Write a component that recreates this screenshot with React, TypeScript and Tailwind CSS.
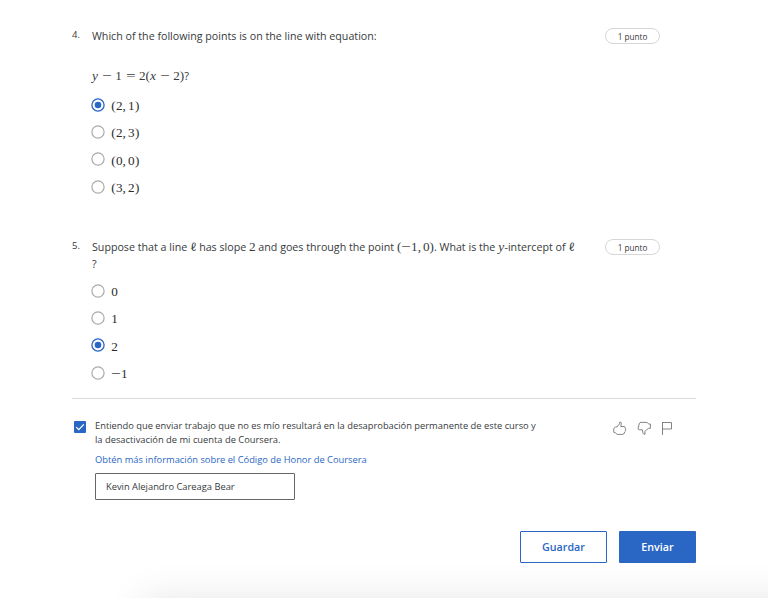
import type { ReactNode } from "react";

function Var({ children }: { children: ReactNode }) {
  return <i className="mr-[0.4px] font-['Liberation_Serif',serif] text-[13.4px] leading-none italic">{children}</i>;
}

function Num({ children }: { children: ReactNode }) {
  return <span className="font-['Liberation_Serif',serif] text-[13.2px] leading-none">{children}</span>;
}

function Ell() {
  return <span className="font-['DejaVu_Math_TeX_Gyre','DejaVu_Serif',serif] text-[11.5px] leading-none">ℓ</span>;
}

function Op({ children }: { children: ReactNode }) {
  return (
    <span className="mx-[3.3px] inline-block w-[10.4px] text-center">
      <span className="inline-block scale-x-130">{children}</span>
    </span>
  );
}

function Neg() {
  return (
    <span className="inline-block w-[9.8px] text-center">
      <span className="inline-block scale-x-130">−</span>
    </span>
  );
}

function Pair({ a, b }: { a: string; b: string }) {
  return (
    <Num>
      (<span className="ml-[0.4px]">{a}</span>,<span className="mr-[0.4px] ml-[2.2px]">{b}</span>)
    </Num>
  );
}

function Option({ checked, children }: { checked?: boolean; children: ReactNode }) {
  return (
    <label className="flex h-[27.4px] items-center">
      <svg className="h-[14px] w-[14px] shrink-0" viewBox="0 0 14 14" fill="none">
        <circle cx="7" cy="7" r="6.1" stroke={checked ? "#2a67c4" : "#aaaaaa"} strokeWidth={checked ? 1.3 : 1.2} />
        {checked && <circle cx="7" cy="7" r="3.3" fill="#2a67c4" />}
      </svg>
      <span className="-mt-px ml-[6.2px] block leading-none whitespace-nowrap text-[#2c2c2c]">{children}</span>
    </label>
  );
}

function Question({ n, top, children }: { n: string; top: string; children: ReactNode }) {
  return (
    <section className={`flex ${top}`}>
      <span className="w-5 shrink-0 text-[9.5px] leading-[14px]">{n}</span>
      <div className="w-[513px] shrink-0">{children}</div>
      <span className="flex h-4 w-[55px] items-center justify-center rounded-full border border-[#d6d6d6] pt-[2px] text-[8.2px]">
        1 punto
      </span>
    </section>
  );
}

export default function App() {
  return (
    <main className="relative h-[598px] w-[768px] overflow-hidden bg-white pl-[72px] font-['Open_Sans',sans-serif] text-[#373a3c]">
      <Question n="4." top="h-[211px] pt-7">
        <p className="text-[10.68px] leading-[17px] whitespace-nowrap">
          Which of the following points is on the line with equation:
        </p>
        <div className="mt-[23px] h-4 text-[11px] leading-4 whitespace-nowrap">
          <Var>y</Var>
          <Num><Op>−</Op>1<Op>=</Op>2(</Num>
          <Var>x</Var>
          <Num><Op>−</Op>2)</Num>?
        </div>
        <div className="mt-[7px] -ml-px">
          <Option checked><Pair a="2" b="1" /></Option>
          <Option><Pair a="2" b="3" /></Option>
          <Option><Pair a="0" b="0" /></Option>
          <Option><Pair a="3" b="2" /></Option>
        </div>
      </Question>

      <Question n="5." top="h-[187px] pt-7">
        <p className="text-[10.68px] leading-[17px] whitespace-nowrap">
          Suppose that a line <Ell /> has slope <Num>2</Num> and goes through the point{" "}
          <Num>(<Neg />1,<span className="ml-[2px]">0</span>)</Num>. What is the <Var>y</Var>-intercept of <Ell />
          <br />?
        </p>
        <div className="mt-[4px] -ml-px">
          <Option><Num>0</Num></Option>
          <Option><Num>1</Num></Option>
          <Option checked><Num>2</Num></Option>
          <Option><Num><Neg />1</Num></Option>
        </div>
      </Question>

      <section className="flex h-[133px] w-[624px] border-t border-[#dadada] pt-5">
        <div className="mt-[2px] ml-[2px] h-3 w-3 shrink-0 rounded-[1px] bg-[#2a67c4]">
          <svg viewBox="0 0 12 12" fill="none" stroke="white" strokeWidth="1.3">
            <path d="M2.2 6.1 4.8 8.6 9.8 3.4" />
          </svg>
        </div>
        <div className="ml-[9px] w-[518px] shrink-0 text-[9.34px] leading-[14px]">
          <p className="whitespace-nowrap">
            Entiendo que enviar trabajo que no es mío resultará en la desaprobación permanente de este curso y
            <br />
            la desactivación de mi cuenta de Coursera.
          </p>
          <a className="mt-[6px] block whitespace-nowrap text-[#2a67c4]">
            Obtén más información sobre el Código de Honor de Coursera
          </a>
          <div className="mt-[6px] flex h-[27px] w-[200px] items-center rounded-[1px] border border-[#666] px-[10px]">
            Kevin Alejandro Careaga Bear
          </div>
        </div>
        <svg className="mt-[2px] h-[15px] w-[60px] shrink-0" viewBox="0 0 60 15" fill="none" stroke="#666" strokeWidth=".8" strokeLinejoin="round">
          <path d="M.7 7.5 2.5 6H4L6.6 2.7V1.3Q8.3.5 8.3 2.3L7.8 5.5H11Q12.7 6 12.2 7.2 13.4 8 12.4 9.3 12.7 10.5 11.6 11 11.5 13.3 9.7 13.4H4.2L2.3 11.8.8 11.3Z" />
          <path d="M25.2 6.8 26.4 2.2Q26.8 1.4 28 1.4H33Q35 1.7 35.8 3H37.4V7.3H35.4L31.7 10.5 32.2 13Q30.7 14 30.1 12.4L29.3 8.8H26.1Q24.6 8.2 25.2 6.8Z" />
          <path d="M49.5 1V14M49.5 1.5H58.5V8H49.5" />
        </svg>
      </section>

      <div className="flex w-[624px] justify-end gap-3 text-[10.7px] font-semibold">
        <button className="h-8 w-[87px] rounded-[1px] border border-[#2a67c4] bg-white text-[#2a67c4]">Guardar</button>
        <button className="h-8 w-[77px] rounded-[1px] bg-[#2a67c4] text-white">Enviar</button>
      </div>
      <div className="pointer-events-none absolute top-[600px] left-[142px] h-20 w-[700px] shadow-[0_0_40px_rgba(0,0,0,0.11)]" />
    </main>
  );
}
